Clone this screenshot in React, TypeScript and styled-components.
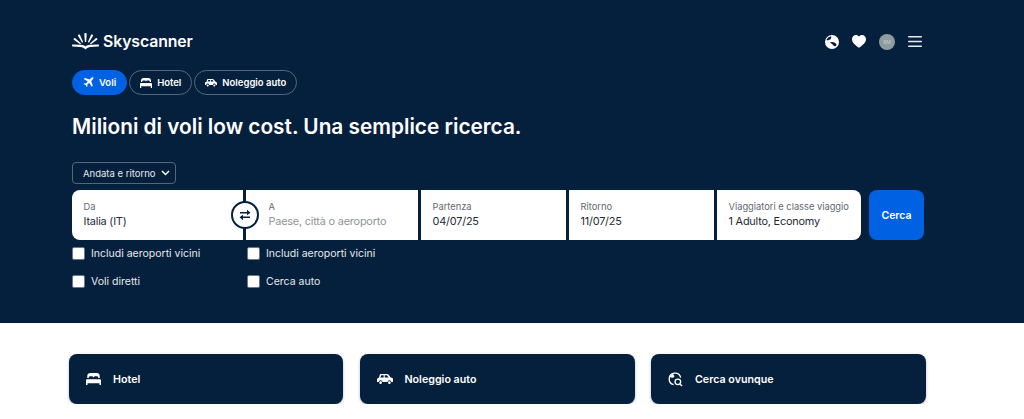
import React from 'react'
import styled, { createGlobalStyle } from 'styled-components'

const navy = '#05203c'
const blue = '#0062e3'

const GlobalStyle = createGlobalStyle`
  html, body {
    margin: 0;
    padding: 0;
    background: #fff;
    overflow: hidden;
  }
  body {
    font-family: Inter, "Liberation Sans", sans-serif;
  }
`

const Hero = styled.header`
  background: ${navy};
  height: 323px;
  padding: 0 100px 0 72px;
  box-sizing: border-box;
`

const TopBar = styled.div`
  height: 70px;
  display: flex;
  align-items: center;
  justify-content: space-between;
  padding: 13px 2px 0 0;
  box-sizing: border-box;
`

const Brand = styled.div`
  display: flex;
  align-items: center;
  gap: 4px;
  color: #fff;
  font-size: 15.8px;
  font-weight: 600;
  letter-spacing: -0.1px;
`

const TopIcons = styled.div`
  display: flex;
  align-items: center;
  gap: 13px;
`

const Avatar = styled.div`
  width: 16px;
  height: 16px;
  border-radius: 50%;
  background: #8e9c9f;
  color: #c4cccd;
  font-size: 5px;
  display: flex;
  align-items: center;
  justify-content: center;
`

const Tabs = styled.nav`
  display: flex;
  gap: 2px;
  height: 25px;
`

const Tab = styled.div<{ $active?: boolean }>`
  display: flex;
  align-items: center;
  gap: 5px;
  padding: 0 10px;
  border-radius: 13px;
  box-sizing: border-box;
  color: #fff;
  font-size: 9.5px;
  font-weight: 600;
  background: ${(p) => (p.$active ? blue : 'transparent')};
  border: 1px solid ${(p) => (p.$active ? blue : '#56677a')};
`

const Title = styled.h1`
  margin: 17px 0 0;
  height: 29px;
  line-height: 29px;
  color: #fff;
  font-size: 20.8px;
  font-weight: 600;
  white-space: nowrap;
`

const TripSelect = styled.div`
  margin-top: 21px;
  width: 104px;
  height: 22px;
  box-sizing: border-box;
  display: flex;
  align-items: center;
  justify-content: space-between;
  padding: 0 5px 0 10px;
  border: 1px solid #56677a;
  border-radius: 4px;
  color: #e6e9ec;
  font-size: 9.5px;
`

const SearchRow = styled.div`
  margin-top: 6px;
  display: flex;
  height: 50px;
  width: 852px;
`

const Fields = styled.div`
  position: relative;
  display: grid;
  grid-template-columns: 171px 172px 145px 145px 144px;
  column-gap: 3px;
  margin-right: 8px;
`

const Field = styled.div<{ $first?: boolean; $last?: boolean; $afterSwap?: boolean }>`
  background: #fff;
  padding: 11px 11px 0 ${(p) => (p.$afterSwap ? '22.5px' : '11.5px')};
  box-sizing: border-box;
  border-radius: ${(p) => (p.$first ? '8px 0 0 8px' : p.$last ? '0 8px 8px 0' : '0')};
`

const FieldLabel = styled.div`
  font-size: 9.3px;
  line-height: 12px;
  color: #626971;
  white-space: nowrap;
`

const FieldValue = styled.div<{ $placeholder?: boolean }>`
  margin-top: 1px;
  font-size: 10.9px;
  line-height: 15px;
  letter-spacing: -0.2px;
  color: ${(p) => (p.$placeholder ? '#8f949a' : '#1e2a36')};
  white-space: nowrap;
`

const Swap = styled.div`
  position: absolute;
  left: 158.5px;
  top: 11px;
  width: 28px;
  height: 28px;
  box-sizing: border-box;
  border-radius: 50%;
  border: 2px solid ${navy};
  background: #fff;
  display: flex;
  align-items: center;
  justify-content: center;
`

const SearchButton = styled.div`
  width: 55px;
  background: ${blue};
  border-radius: 8px;
  color: #fff;
  font-size: 10.5px;
  font-weight: 600;
  display: flex;
  align-items: center;
  justify-content: center;
`

const Options = styled.div`
  margin-top: 6px;
  display: grid;
  grid-template-columns: 175px 175px;
  grid-auto-rows: 14px;
  row-gap: 14px;
`

const Option = styled.label`
  display: flex;
  align-items: center;
  gap: 6px;
  color: #e6e9ec;
  font-size: 10.5px;
  white-space: nowrap;
`

const Box = styled.span`
  width: 13px;
  height: 13px;
  background: #fff;
  border: 1px solid #6b7885;
  border-radius: 2px;
  box-sizing: border-box;
`

const Cards = styled.section`
  display: grid;
  grid-template-columns: 274px 275px 275px;
  column-gap: 16.5px;
  padding: 31px 0 0 69px;
`

const Card = styled.div`
  height: 50px;
  background: ${navy};
  border-radius: 8px;
  box-shadow: 0 1px 3px rgba(5, 32, 60, 0.3);
  display: flex;
  align-items: center;
  gap: 12px;
  padding-left: 17px;
  color: #fff;
  font-size: 10.7px;
  font-weight: 600;
`

const Logo = () => (
  <svg width="27" height="17" viewBox="0 0 27 17" fill="#fff">
    <path d="M13.5 16.5c-1.3-1.6-3-2.4-5.2-2.6L.6 13.5c-.8-.1-.8-2 0-2l8 .3c2.2.1 3.9.7 4.9 1.7 1-1 2.7-1.6 4.9-1.7l8-.3c.8 0 .8 1.900 0 2l-7.700.4c-2.200.2-3.900 1-5.200 2.600z" />
    <path d="M12.3 1c0-1.2 2.400-1.200 2.400 0l-.5 7.600c0 .5-1.400.5-1.400 0zM6 2.800c-.4-1 1.500-1.800 2-.8l3 6.800c.2.5-1 1-1.200.5zM21 2.800c.4-1-1.500-1.800-2-.8l-3 6.800c-.2.5 1 1 1.200.5zM1.800 6.800c-.7-.8.7-2.300 1.500-1.600l5.500 5c.4.4-.5 1.300-.9.9zM25.200 6.800c.7-.8-.7-2.300-1.500-1.600l-5.500 5c-.4.4.5 1.300.9.9z" />
  </svg>
)

const Globe = () => (
  <svg width="14" height="14" viewBox="0 0 14 14">
    <circle cx="7" cy="7" r="7" fill="#fff" />
    <path d="M6 1.200C4 1.500 2.200 3 1.400 5c1.300.5 2.800.4 3.600-.4C6 3.700 6.600 2.400 6 1.200zM4.600 7.400c2-1 4.600-.5 6.200 1 .8.700.8 1.600.2 2.500-1 .7-2 .3-2.600-.5-.9-1.400-2.400-2.200-3.800-3z" fill={navy} />
  </svg>
)

const Heart = () => (
  <svg width="14" height="13" viewBox="0 0 14 13" fill="#fff">
    <path d="M7 12.800C2.500 9.500 0 7.200 0 4.200 0 1.800 1.800 0 4 0c1.300 0 2.300.6 3 1.600C7.700.6 8.700 0 10 0c2.200 0 4 1.800 4 4.200 0 3-2.500 5.300-7 8.600z" />
  </svg>
)

const Menu = () => (
  <svg width="14" height="11" viewBox="0 0 14 11" fill="#e8ebee">
    <rect width="14" height="1.400" rx=".7" />
    <rect y="4.800" width="14" height="1.400" rx=".7" />
    <rect y="9.600" width="14" height="1.400" rx=".7" />
  </svg>
)

const Plane = () => (
  <svg width="11" height="11" viewBox="0 0 12 12" fill="#fff">
    <path d="M11.400.6c-.6-.6-1.600-.5-2.300.2L7.300 2.600 2 1 .9 2.100l4.300 2.700-2 2.200-1.700-.3-.8.8 2.200 1.200 1.200 2.200.8-.8L4.600 8.400l2.200-2 2.700 4.300L10.600 9.600 9 4.300l1.800-1.800c.7-.7.800-1.400.6-1.900z" />
  </svg>
)

const Bed = ({ size = 12 }: { size?: number }) => (
  <svg width={size} height={(size * 10) / 12} viewBox="0 0 12 10" fill="#fff">
    <path d="M3.500 0h5C10 0 11 1 11 2.500V4H9.800c0-.9-.5-1.400-1.300-1.400H7.400c-.7 0-1.200.5-1.400 1.100-.2-.6-.7-1.100-1.400-1.100H3.500c-.8 0-1.300.5-1.300 1.400H1V2.500C1 1 2 0 3.500 0z" />
    <path d="M.7 5h10.600c.4 0 .7.300.7.700V8.200H0V5.700C0 5.300.3 5 .7 5z" />
    <path d="M0 8h1.200v2H0zM10.800 8H12v2h-1.200z" />
  </svg>
)

const Car = ({ size = 12 }: { size?: number }) => (
  <svg width={size} height={(size * 8) / 12} viewBox="0 0 12 8" fill="#fff">
    <path d="M3 0h4.500c.5 0 1 .2 1.300.6L10.200 2.600l1 .3c.5.200.8.600.8 1.100V6h-1.300a1.400 1.400 0 0 0-2.800 0H4.100a1.400 1.400 0 0 0-2.800 0H0V4c0-.5.300-.9.800-1l.8-.3L2 .6C2.200.2 2.600 0 3 0z" />
    <circle cx="2.700" cy="6.500" r="1" />
    <circle cx="9.300" cy="6.500" r="1" />
    <path d="M3.200 1h1.800v1.600H2.500zM5.800 1h1.700l1.200 1.600H5.800z" fill={navy} />
  </svg>
)

const SearchGlobe = () => (
  <svg width="15" height="15" viewBox="0 0 16 16" fill="none" stroke="#fff" strokeWidth="1.400">
    <path d="M13.500 6A6.200 6.200 0 1 0 6 13.500" />
    <path d="M5 1.500C4 3 3 4 1.500 5c1.500 1 3 1.500 4 1L7 4.500z" fill="#fff" stroke="none" />
    <circle cx="10.500" cy="10.500" r="3" />
    <path d="M13 13l2 2" />
  </svg>
)

const Chevron = () => (
  <svg width="9" height="6" viewBox="0 0 9 6" fill="none" stroke="#fff" strokeWidth="1.500">
    <path d="M1 1l3.500 3.500L8 1" />
  </svg>
)

const SwapIcon = () => (
  <svg width="12" height="12" viewBox="0 0 12 12" fill={navy}>
    <path d="M1 3h7V.8L11.500 3.800 8 6.200V4.500H1zM11 7.500v1.500H4v2.200L.5 8.200 4 5.800v1.700z" />
  </svg>
)

const App: React.FC = () => {
  return (
    <>
      <GlobalStyle />
      <Hero>
        <TopBar>
          <Brand>
            <Logo />
            Skyscanner
          </Brand>
          <TopIcons>
            <Globe />
            <Heart />
            <Avatar>RM</Avatar>
            <Menu />
          </TopIcons>
        </TopBar>
        <Tabs>
          <Tab $active>
            <Plane />
            Voli
          </Tab>
          <Tab>
            <Bed />
            Hotel
          </Tab>
          <Tab>
            <Car />
            Noleggio auto
          </Tab>
        </Tabs>
        <Title>Milioni di voli low cost. Una semplice ricerca.</Title>
        <TripSelect>
          Andata e ritorno
          <Chevron />
        </TripSelect>
        <SearchRow>
          <Fields>
            <Field $first>
              <FieldLabel>Da</FieldLabel>
              <FieldValue>Italia (IT)</FieldValue>
            </Field>
            <Field $afterSwap>
              <FieldLabel>A</FieldLabel>
              <FieldValue $placeholder>Paese, città o aeroporto</FieldValue>
            </Field>
            <Field>
              <FieldLabel>Partenza</FieldLabel>
              <FieldValue>04/07/25</FieldValue>
            </Field>
            <Field>
              <FieldLabel>Ritorno</FieldLabel>
              <FieldValue>11/07/25</FieldValue>
            </Field>
            <Field $last>
              <FieldLabel>Viaggiatori e classe viaggio</FieldLabel>
              <FieldValue>1 Adulto, Economy</FieldValue>
            </Field>
            <Swap>
              <SwapIcon />
            </Swap>
          </Fields>
          <SearchButton>Cerca</SearchButton>
        </SearchRow>
        <Options>
          <Option>
            <Box />
            Includi aeroporti vicini
          </Option>
          <Option>
            <Box />
            Includi aeroporti vicini
          </Option>
          <Option>
            <Box />
            Voli diretti
          </Option>
          <Option>
            <Box />
            Cerca auto
          </Option>
        </Options>
      </Hero>
      <Cards>
        <Card>
          <Bed size={15} />
          Hotel
        </Card>
        <Card>
          <Car size={16} />
          Noleggio auto
        </Card>
        <Card>
          <SearchGlobe />
          Cerca ovunque
        </Card>
      </Cards>
    </>
  )
}

export default App
